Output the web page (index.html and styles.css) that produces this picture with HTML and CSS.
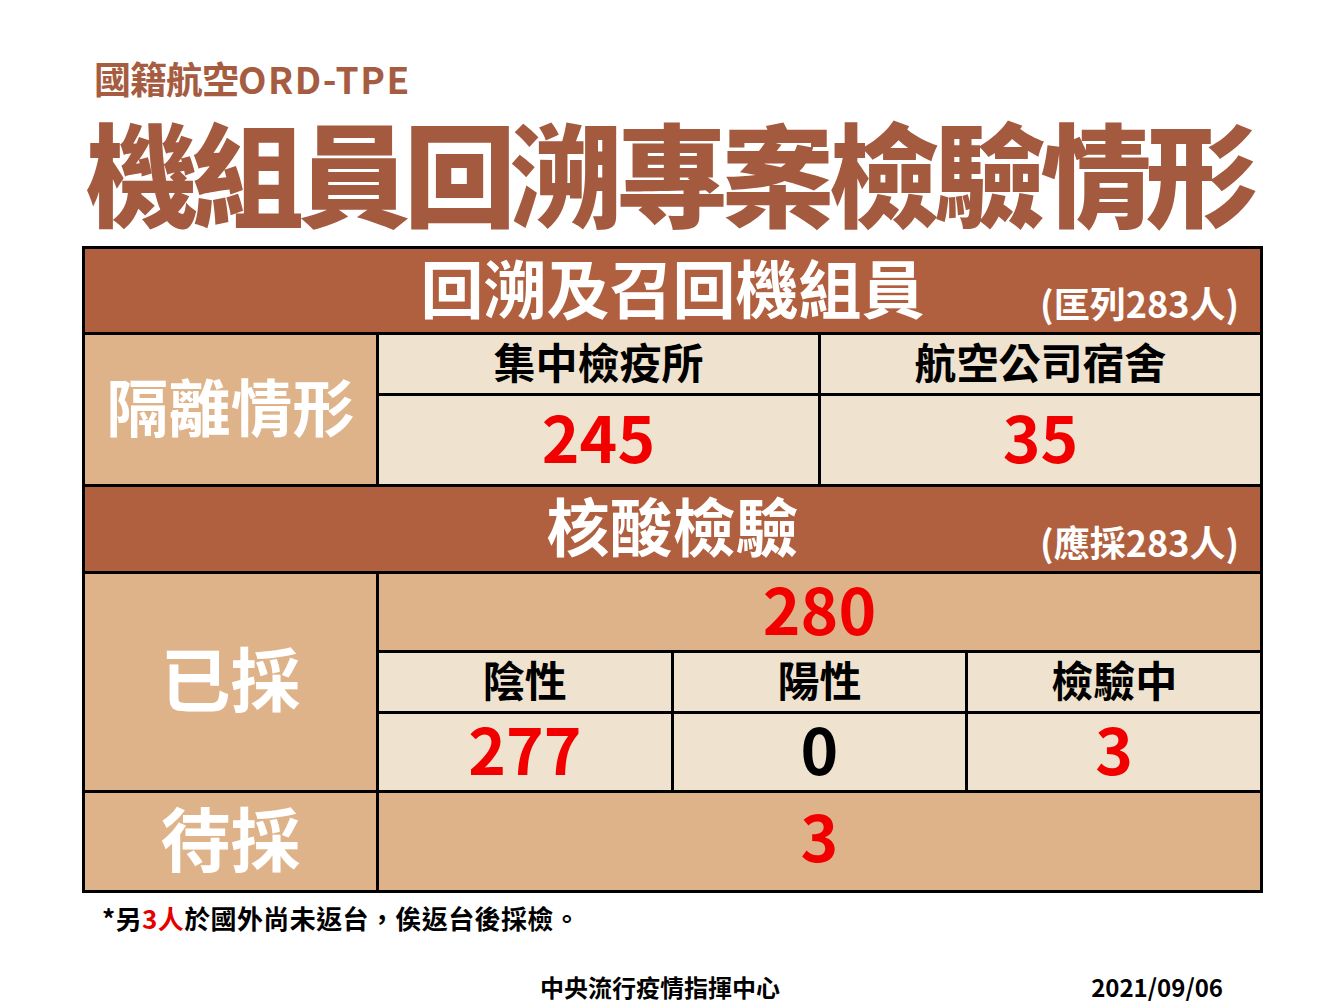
FILE: index.html
```html
<!DOCTYPE html>
<html lang="zh-Hant">
<head>
<meta charset="utf-8">
<title>機組員回溯專案檢驗情形</title>
<link rel="stylesheet" href="styles.css">
</head>
<body>
<div class="page">
  <div class="subtitle">國籍航空<span class="latin">ORD-TPE</span></div>
  <h1 class="title">機組員回溯專案檢驗情形</h1>

  <div class="tbl">
    <div class="hdr">
      <span class="hdr-main">回溯及召回機組員</span>
      <span class="hdr-note">(匡列283人)</span>
    </div>

    <div class="sec iso">
      <div class="lbl lbl-iso">隔離情形</div>
      <div class="grid2">
        <div class="cell head">集中檢疫所</div>
        <div class="cell head">航空公司宿舍</div>
        <div class="cell val">245</div>
        <div class="cell val">35</div>
      </div>
    </div>

    <div class="hdr hdr2">
      <span class="hdr-main">核酸檢驗</span>
      <span class="hdr-note">(應採283人)</span>
    </div>

    <div class="sec sampled">
      <div class="lbl lbl-big">已採</div>
      <div class="right">
        <div class="cell total val">280</div>
        <div class="grid3">
          <div class="cell head">陰性</div>
          <div class="cell head">陽性</div>
          <div class="cell head">檢驗中</div>
          <div class="cell val">277</div>
          <div class="cell val black">0</div>
          <div class="cell val">3</div>
        </div>
      </div>
    </div>

    <div class="sec pending">
      <div class="lbl lbl-big">待採</div>
      <div class="cell total val pend-val">3</div>
    </div>
  </div>

  <p class="note">*另<span class="red">3人</span>於國外尚未返台，俟返台後採檢。</p>

  <div class="footer">
    <span class="org">中央流行疫情指揮中心</span>
    <span class="date">2021/09/06</span>
  </div>
</div>
</body>
</html>
```

FILE: styles.css
```css
html, body {
  margin: 0;
  padding: 0;
  background: #ffffff;
}

body {
  font-family: "Noto Sans CJK TC", "Noto Sans CJK SC", sans-serif;
  width: 1344px;
  height: 1008px;
  overflow: hidden;
}

.page {
  padding: 56px 0 0 82px;
  width: 1181px;
}

.subtitle {
  padding-left: 12px;
  font-size: 37px;
  line-height: 44px;
  height: 44px;
  font-weight: 700;
  color: #a65c41;
  letter-spacing: -1px;
  white-space: nowrap;
}

.latin {
  letter-spacing: 1.5px;
}

.title {
  margin: 10px 0 16px 0;
  padding-left: 4px;
  font-size: 112px;
  line-height: 120px;
  height: 120px;
  font-weight: 900;
  color: #a45a3f;
  letter-spacing: -6px;
  white-space: nowrap;
}

.tbl {
  border: 3px solid #000;
  background: #000;
  display: flex;
  flex-direction: column;
  gap: 3px;
  width: 1175px;
}

.hdr {
  height: 83px;
  background: #b0603f;
  color: #fff;
  display: grid;
  grid-template-columns: 1fr auto 1fr;
  align-items: center;
}

.hdr2 {
  height: 84px;
}

.hdr-main {
  grid-column: 2;
  font-size: 63px;
  font-weight: 700;
  line-height: 1;
  padding-bottom: 11px;
}

.hdr-note {
  grid-column: 3;
  justify-self: end;
  align-self: end;
  font-size: 36px;
  font-weight: 700;
  line-height: 1;
  padding: 0 21px 12px 0;
}

.sec {
  display: grid;
  grid-template-columns: 291px 881px;
  gap: 3px;
}

.iso { height: 149px; }
.sampled { height: 216px; }
.pending { height: 97px; }

.lbl {
  background: #dfb38a;
  color: #fff;
  font-weight: 700;
  display: flex;
  align-items: center;
  justify-content: center;
  line-height: 1;
}

.lbl-iso {
  font-size: 62px;
  padding-bottom: 10px;
}

.lbl-big {
  font-size: 70px;
  padding-bottom: 10px;
}

.grid2 {
  display: grid;
  grid-template-columns: 1fr 1fr;
  grid-template-rows: 58px 88px;
  gap: 3px;
}

.right {
  display: grid;
  grid-template-rows: 76px 1fr;
  gap: 3px;
}

.grid3 {
  display: grid;
  grid-template-columns: 1fr 1fr 1fr;
  grid-template-rows: 58px 76px;
  gap: 3px;
}

.cell {
  background: #efe3cf;
  display: flex;
  align-items: center;
  justify-content: center;
  line-height: 1;
  font-weight: 700;
}

.cell.total {
  background: #dfb38a;
}

.head {
  font-size: 42px;
  color: #000;
  padding-bottom: 6px;
}

.val {
  font-size: 64px;
  color: #f20000;
  padding-bottom: 10px;
}

.val.black {
  color: #000;
}

.pend-val {
  padding-bottom: 16px;
}

.note {
  margin: 10px 0 0 20px;
  font-size: 26px;
  line-height: 30px;
  font-weight: 700;
  color: #000;
  letter-spacing: 0.4px;
}

.red {
  color: #e60000;
}

.footer {
  margin-top: 40px;
  display: grid;
  grid-template-columns: 1fr auto 1fr;
  align-items: center;
  font-size: 24px;
  line-height: 28px;
  font-weight: 700;
  color: #000;
}

.org {
  grid-column: 2;
  margin-left: -25px;
}

.date {
  grid-column: 3;
  justify-self: end;
  margin-right: 40px;
}
```
